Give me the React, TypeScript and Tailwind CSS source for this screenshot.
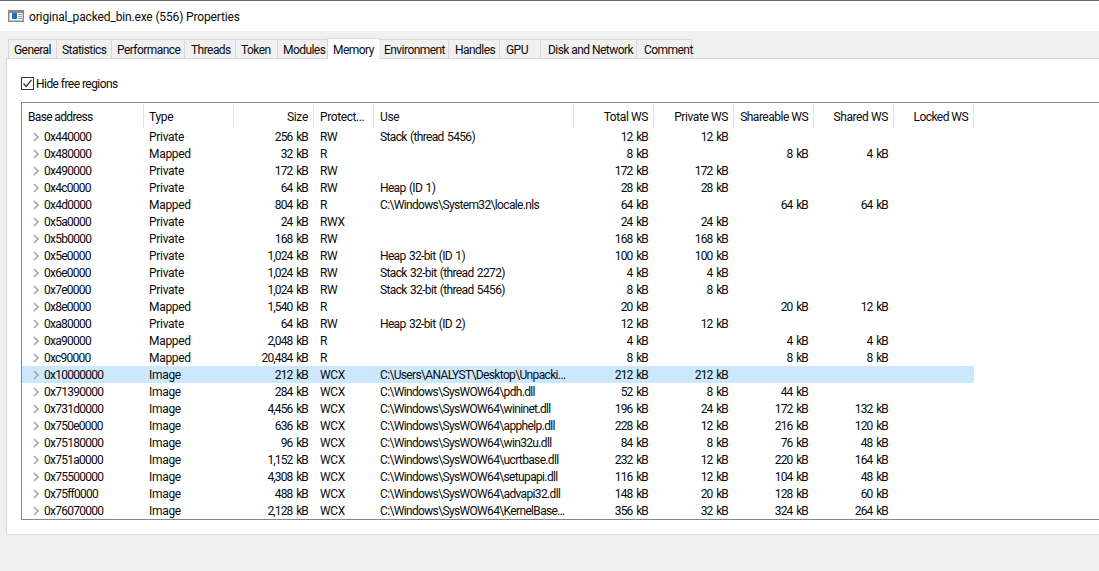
const tabs = [
  ["General", "w-[49px] pl-[5px]"],
  ["Statistics", "w-[55px] pl-[5px]"],
  ["Performance", "w-[73px] pl-[5px]"],
  ["Threads", "w-[51px] pl-[6px]"],
  ["Token", "w-[42px] pl-[5px]"],
  ["Modules", "w-[50px] pl-[5px]"],
  ["Memory", "w-[53px]"],
  ["Environment", "w-[70px] pl-[5px]"],
  ["Handles", "w-[51px] pl-[6px]"],
  ["GPU", "w-[41px] pl-[6px]"],
  ["Disk and Network", "w-[96px] pl-[7px]"],
  ["Comment", "w-[55px] pl-[7px]"],
];

const gridCols = "grid grid-cols-[122px_90px_80px_60px_200px_80px_80px_80px_80px_80px]";

const headers: [string, boolean, string][] = [
  ["Base address", false, "tracking-[-0.65px]"],
  ["Type", false, ""],
  ["Size", true, ""],
  ["Protect...", false, "tracking-[-0.4px] pl-[6px]"],
  ["Use", false, "pl-[6px]"],
  ["Total WS", true, "tracking-[-0.4px]"],
  ["Private WS", true, "tracking-[-0.4px]"],
  ["Shareable WS", true, "tracking-[-0.5px]"],
  ["Shared WS", true, "tracking-[-0.4px]"],
  ["Locked WS", true, "tracking-[-0.55px]"],
];

const rows = [
  ["0x440000", "Private", "256 kB", "RW", "Stack (thread 5456)", "12 kB", "12 kB", "", "", ""],
  ["0x480000", "Mapped", "32 kB", "R", "", "8 kB", "", "8 kB", "4 kB", ""],
  ["0x490000", "Private", "172 kB", "RW", "", "172 kB", "172 kB", "", "", ""],
  ["0x4c0000", "Private", "64 kB", "RW", "Heap (ID 1)", "28 kB", "28 kB", "", "", ""],
  ["0x4d0000", "Mapped", "804 kB", "R", "C:\\Windows\\System32\\locale.nls", "64 kB", "", "64 kB", "64 kB", ""],
  ["0x5a0000", "Private", "24 kB", "RWX", "", "24 kB", "24 kB", "", "", ""],
  ["0x5b0000", "Private", "168 kB", "RW", "", "168 kB", "168 kB", "", "", ""],
  ["0x5e0000", "Private", "1,024 kB", "RW", "Heap 32-bit (ID 1)", "100 kB", "100 kB", "", "", ""],
  ["0x6e0000", "Private", "1,024 kB", "RW", "Stack 32-bit (thread 2272)", "4 kB", "4 kB", "", "", ""],
  ["0x7e0000", "Private", "1,024 kB", "RW", "Stack 32-bit (thread 5456)", "8 kB", "8 kB", "", "", ""],
  ["0x8e0000", "Mapped", "1,540 kB", "R", "", "20 kB", "", "20 kB", "12 kB", ""],
  ["0xa80000", "Private", "64 kB", "RW", "Heap 32-bit (ID 2)", "12 kB", "12 kB", "", "", ""],
  ["0xa90000", "Mapped", "2,048 kB", "R", "", "4 kB", "", "4 kB", "4 kB", ""],
  ["0xc90000", "Mapped", "20,484 kB", "R", "", "8 kB", "", "8 kB", "8 kB", ""],
  ["0x10000000", "Image", "212 kB", "WCX", "C:\\Users\\ANALYST\\Desktop\\Unpacki...", "212 kB", "212 kB", "", "", ""],
  ["0x71390000", "Image", "284 kB", "WCX", "C:\\Windows\\SysWOW64\\pdh.dll", "52 kB", "8 kB", "44 kB", "", ""],
  ["0x731d0000", "Image", "4,456 kB", "WCX", "C:\\Windows\\SysWOW64\\wininet.dll", "196 kB", "24 kB", "172 kB", "132 kB", ""],
  ["0x750e0000", "Image", "636 kB", "WCX", "C:\\Windows\\SysWOW64\\apphelp.dll", "228 kB", "12 kB", "216 kB", "120 kB", ""],
  ["0x75180000", "Image", "96 kB", "WCX", "C:\\Windows\\SysWOW64\\win32u.dll", "84 kB", "8 kB", "76 kB", "48 kB", ""],
  ["0x751a0000", "Image", "1,152 kB", "WCX", "C:\\Windows\\SysWOW64\\ucrtbase.dll", "232 kB", "12 kB", "220 kB", "164 kB", ""],
  ["0x75500000", "Image", "4,308 kB", "WCX", "C:\\Windows\\SysWOW64\\setupapi.dll", "116 kB", "12 kB", "104 kB", "48 kB", ""],
  ["0x75ff0000", "Image", "488 kB", "WCX", "C:\\Windows\\SysWOW64\\advapi32.dll", "148 kB", "20 kB", "128 kB", "60 kB", ""],
  ["0x76070000", "Image", "2,128 kB", "WCX", "C:\\Windows\\SysWOW64\\KernelBase...", "356 kB", "32 kB", "324 kB", "264 kB", ""],
];

const cellStyles = [
  "flex items-center pl-[10px] tracking-[-0.75px]",
  "pl-[5px] tracking-[-0.3px]",
  "pl-[5px] text-right tracking-[-0.85px] [word-spacing:1.5px]",
  "pl-[6px] tracking-[-0.3px]",
  "pl-[6px] tracking-[-0.65px] [word-spacing:1px]",
  "pl-[5px] text-right tracking-[-0.85px] [word-spacing:1.5px]",
  "pl-[5px] text-right tracking-[-0.85px] [word-spacing:1.5px]",
  "pl-[5px] text-right tracking-[-0.85px] [word-spacing:1.5px]",
  "pl-[5px] text-right tracking-[-0.85px] [word-spacing:1.5px]",
  "pl-[5px] text-right tracking-[-0.85px] [word-spacing:1.5px]",
];

export default function App() {
  return (
    <div className="w-[1099px] h-[571px] overflow-hidden bg-[#f0f0f0] font-['Roboto',sans-serif] text-[12px] leading-[17px] text-[#0a0a0a] tracking-[-0.3px]">
      <div className="h-[31px] bg-white border-t border-[#6b6b6b] flex items-center pl-[8px] gap-[5px]">
        <svg width="16" height="12" viewBox="0 0 16 12" className="shrink-0">
          <rect x="0.75" y="0.75" width="14.5" height="10.5" fill="#fff" stroke="#8a8a8a" strokeWidth="1.5" />
          <rect x="1" y="1" width="14" height="2" fill="#8a8a8a" />
          <rect x="4" y="3" width="5" height="6" fill="#0f78d4" />
          <rect x="10" y="4" width="4" height="1" fill="#a0a0a0" />
          <rect x="10" y="6" width="4" height="1" fill="#a0a0a0" />
          <rect x="10" y="8" width="4" height="1" fill="#a0a0a0" />
        </svg>
        <span className="pt-[2px] tracking-[-0.15px]">original_packed_bin.exe (556) Properties</span>
      </div>

      <div className="pt-[7px] flex pl-[8px] h-[27px] items-end relative z-10 tracking-[-0.55px]">
        {tabs.map(([label, w]) =>
          label === "Memory" ? (
            <div key={label} className={`${w} h-[21px] -mb-px bg-white border border-b-0 border-[#d9d9d9] flex justify-center items-start pt-[3px] -ml-px -mr-px`}>
              {label}
            </div>
          ) : (
            <div key={label} className={`${w} h-[19px] bg-[#f0f0f0] border border-l-0 first:border-l border-b-0 border-[#d9d9d9] pt-[3px] flex items-center whitespace-nowrap`}>
              {label}
            </div>
          )
        )}
      </div>

      <div className="ml-[6px] h-[477px] bg-white border border-r-0 border-[#d9d9d9] pl-[14px] pt-[16px]">
        <label className="flex items-center gap-[1px] h-[16px]">
          <span className="w-[13px] h-[13px] border border-[#333] bg-white flex items-center justify-center">
            <svg width="11" height="11" viewBox="0 0 11 11">
              <path d="M1.5 5.5 L4.2 8.5 L9.5 1.8" fill="none" stroke="#333" strokeWidth="1.3" />
            </svg>
          </span>
          <span className="pl-[1px] pt-[2px] tracking-[-0.55px]">Hide free regions</span>
        </label>

        <div className="mt-[11px] h-[418px] border-l border-t border-b border-[#828790] overflow-hidden">
          <div className={`${gridCols} h-[25px] w-[952px] pt-[1px]`}>
            {headers.map(([h, right, track]) => (
              <div key={h} className={`border-r border-[#e5e5e5] h-[24px] flex items-center px-[5px] pt-[3px] whitespace-nowrap ${right ? "justify-end" : ""} ${h === "Base address" ? "pl-[6px]" : ""} ${track}`}>
                {h}
              </div>
            ))}
          </div>
          <div>
            {rows.map((r) => (
              <div key={r[0]} className={`${gridCols} h-[17px] w-[952px] ${r[0] === "0x10000000" ? "bg-[#cce8ff]" : ""}`}>
                {r.map((c, i) => (
                  <div key={i} className={`whitespace-nowrap pr-[6px] pt-[2px] leading-[15px] ${cellStyles[i]}`}>
                    {i === 0 ? (
                      <>
                        <svg width="8" height="10" viewBox="0 0 8 10" className="mr-[4px] -mt-[2px] shrink-0">
                          <path d="M2 1 L6 5 L2 9" fill="none" stroke="#a6a6a6" strokeWidth="1.6" />
                        </svg>
                        {c}
                      </>
                    ) : (
                      c
                    )}
                  </div>
                ))}
              </div>
            ))}
          </div>
        </div>
      </div>
    </div>
  );
}
